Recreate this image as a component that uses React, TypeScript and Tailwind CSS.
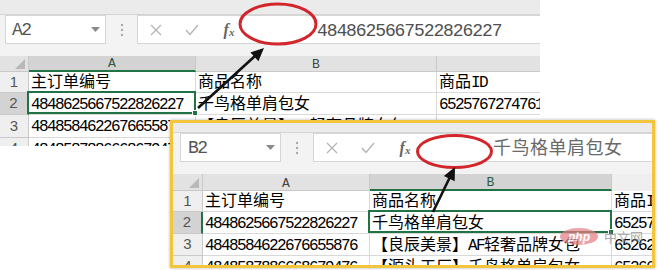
import React from 'react';

type Col = { label: string; w: string; headCls: string; labelCls: string };
type Row = { num: string; h: string; cells: string[] };

function Mixed({ text, asciiCls }: { text: string; asciiCls: string }) {
  const parts = text.match(/[\x00-\x7F]+|[^\x00-\x7F]+/g) || [];
  return (
    <>
      {parts.map((p, i) =>
        /^[\x00-\x7F]/.test(p) ? (
          <span key={i} className={asciiCls}>
            {p}
          </span>
        ) : (
          <span key={i}>{p}</span>
        )
      )}
    </>
  );
}

function Caret() {
  return (
    <svg width="9" height="5" viewBox="0 0 9 5">
      <path d="M0 0 L9 0 L4.5 5 Z" fill="#8a8a8a" />
    </svg>
  );
}

function Dots() {
  return (
    <svg width="4" height="14" viewBox="0 0 4 14">
      <circle cx="2" cy="2" r="1.2" fill="#a8a8a8" />
      <circle cx="2" cy="7" r="1.2" fill="#a8a8a8" />
      <circle cx="2" cy="12" r="1.2" fill="#a8a8a8" />
    </svg>
  );
}

function CrossIcon() {
  return (
    <svg width="12" height="12" viewBox="0 0 12 12">
      <path d="M1 1 L11 11 M11 1 L1 11" stroke="#b5b5b5" strokeWidth="1.3" fill="none" />
    </svg>
  );
}

function CheckIcon() {
  return (
    <svg width="14" height="12" viewBox="0 0 14 12">
      <path d="M1 6 L5 10.5 L13 1" stroke="#b5b5b5" strokeWidth="1.4" fill="none" />
    </svg>
  );
}

function Fx() {
  return (
    <span className="font-['Liberation_Serif',serif] italic text-[#666] leading-none flex items-end">
      <span className="text-[16px] font-bold">f</span>
      <span className="text-[11px] font-bold">x</span>
    </span>
  );
}

function Sheet({
  outerCls,
  topBandCls,
  nameBoxCls,
  name,
  dotsCls,
  formula,
  rhw,
  headH,
  cols,
  selCol,
  selRow,
  rows,
  triCls,
}: {
  outerCls: string;
  topBandCls: string;
  nameBoxCls: string;
  name: string;
  dotsCls: string;
  formula: React.ReactNode;
  rhw: string;
  headH: string;
  cols: Col[];
  selCol: number;
  selRow: number;
  rows: Row[];
  triCls: string;
}) {
  return (
    <div className={`flex flex-col bg-[#f3f3f3] overflow-hidden ${outerCls}`}>
      <div className={`shrink-0 bg-[#ebebeb] border-b border-[#d4d4d4] ${topBandCls}`} />
      <div className="flex items-stretch h-[29px] shrink-0">
        <div
          className={`${nameBoxCls} shrink-0 h-full bg-white border border-[#d6d6d6] flex items-center justify-between pr-[5px]`}
        >
          <span className="font-['Liberation_Mono',monospace] text-[18px] text-[#555] tracking-[-1.5px] leading-none">
            {name}
          </span>
          <Caret />
        </div>
        <div className={`${dotsCls} shrink-0 h-full flex items-center justify-center`}>
          <Dots />
        </div>
        <div className="flex-1 h-full bg-white border border-[#d6d6d6] border-r-0 flex items-center">
          <div className="w-[36px] h-full flex items-center justify-center">
            <CrossIcon />
          </div>
          <div className="w-[36px] h-full flex items-center justify-center">
            <CheckIcon />
          </div>
          <div className="w-[38px] h-full flex items-center justify-center">
            <Fx />
          </div>
          <div className="pl-[69px] whitespace-nowrap">{formula}</div>
        </div>
      </div>
      <div className="h-[12px] shrink-0" />
      <div className={`flex shrink-0 ${headH} bg-[#e2e2e2]`}>
        <div className={`${rhw} shrink-0 relative border-r border-b border-[#c9c9c9]`}>
          <div className={`absolute ${triCls}`}>
            <svg width="10" height="10" viewBox="0 0 10 10">
              <path d="M10 0 L10 10 L0 10 Z" fill="#b9b9b9" />
            </svg>
          </div>
        </div>
        {cols.map((c, i) => (
          <div
            key={i}
            className={`${c.w} shrink-0 flex items-end border-r border-[#c9c9c9] font-['Liberation_Mono',monospace] text-[13px] leading-none ${
              i === selCol
                ? 'bg-[#d3d3d3] border-b-2 border-b-[#217346] text-[#2d5a3f]'
                : 'border-b border-b-[#c9c9c9] text-[#444]'
            } ${c.headCls} ${c.labelCls}`}
          >
            {c.label}
          </div>
        ))}
      </div>
      {rows.map((r, ri) => (
        <div key={ri} className={`flex shrink-0 ${r.h}`}>
          <div
            className={`${rhw} shrink-0 flex items-center justify-center border-b border-[#c9c9c9] font-['Liberation_Sans',sans-serif] text-[15px] text-[#555] ${
              ri === selRow
                ? 'bg-[#d3d3d3] border-r-2 border-r-[#217346]'
                : 'bg-[#efefef] border-r border-r-[#c9c9c9]'
            }`}
          >
            {r.num}
          </div>
          {r.cells.map((c, ci) => {
            const sel = ri === selRow && ci === selCol;
            return (
              <div
                key={ci}
                className={`${cols[ci].w} shrink-0 relative bg-white border-r border-b border-[#d9d9d9]`}
              >
                <div className="w-full h-full overflow-hidden whitespace-nowrap flex items-center pt-[2px] pl-[2px] font-['Liberation_Mono','Noto_Sans_CJK_SC',monospace] text-[16px] leading-none text-black">
                  <Mixed text={c} asciiCls="tracking-[-1.6px]" />
                </div>
                {sel && (
                  <div className="absolute -left-[2px] -top-[2px] -right-[1px] bottom-[0px] border-2 border-[#217346] z-10">
                    <div className="absolute -right-[4px] -bottom-[4px] w-[6px] h-[6px] bg-[#217346] border border-white" />
                  </div>
                )}
              </div>
            );
          })}
        </div>
      ))}
    </div>
  );
}

export default function App() {
  const rows1: Row[] = [
    { num: '1', h: 'h-[21px]', cells: ['主订单编号', '商品名称', '商品ID'] },
    { num: '2', h: 'h-[22px]', cells: ['4848625667522826227', '千鸟格单肩包女', '6525767274761'] },
    { num: '3', h: 'h-[23px]', cells: ['4848584622676655876', '【良辰美景】AF轻奢品牌女包', ''] },
    { num: '4', h: 'h-[22px]', cells: ['4848587886668679476', '【源头工厂】千鸟格单肩包女', ''] },
  ];
  const rows2: Row[] = [
    { num: '1', h: 'h-[21px]', cells: ['主订单编号', '商品名称', '商品ID'] },
    { num: '2', h: 'h-[22px]', cells: ['4848625667522826227', '千鸟格单肩包女', '6525767274761'] },
    { num: '3', h: 'h-[22px]', cells: ['4848584622676655876', '【良辰美景】AF轻奢品牌女包', '6526272747610'] },
    { num: '4', h: 'h-[22px]', cells: ['4848587886668679476', '【源头工厂】千鸟格单肩包女', '6526676274761'] },
  ];
  const cols1: Col[] = [
    { label: 'A', w: 'w-[167px]', headCls: '', labelCls: 'justify-center' },
    { label: 'B', w: 'w-[241px]', headCls: '', labelCls: 'justify-center' },
    { label: 'C', w: 'w-[130px]', headCls: '', labelCls: 'justify-end pr-[16px]' },
  ];
  const cols2: Col[] = [
    { label: 'A', w: 'w-[167px]', headCls: '', labelCls: 'justify-center' },
    { label: 'B', w: 'w-[242px]', headCls: '', labelCls: 'justify-center' },
    { label: '', w: 'w-[90px]', headCls: 'bg-[#efefef] border-b-0', labelCls: '' },
  ];

  return (
    <div className="relative w-[658px] h-[270px] bg-white overflow-hidden">
      <Sheet
        outerCls="w-[540px] h-[146px]"
        topBandCls="h-[15px]"
        nameBoxCls="ml-[5px] w-[101px] pl-[6px]"
        name="A2"
        dotsCls="w-[31px]"
        formula={
          <span className="font-['Liberation_Mono',monospace] text-[18px] tracking-[-1.1px] text-[#505050] leading-none">
            4848625667522826227
          </span>
        }
        rhw="w-[29px]"
        headH="h-[16px]"
        cols={cols1}
        selCol={0}
        selRow={1}
        rows={rows1}
        triCls="right-[3px] bottom-[2px]"
      />

      <div className="absolute left-[170px] top-[120px] w-[485px] h-[148px] border-[3px] border-[#f2c53d] shadow-[0_0_3px_rgba(0,0,0,0.3)] bg-[#f3f3f3]">
        <Sheet
          outerCls="w-full h-full"
          topBandCls="h-[10px]"
          nameBoxCls="ml-[7px] w-[101px] pl-[7px]"
          name="B2"
          dotsCls="w-[32px]"
          formula={
            <span className="font-['Noto_Sans_CJK_SC',sans-serif] text-[18px] tracking-[0.5px] text-[#6a6a6a] leading-none">
              千鸟格单肩包女
            </span>
          }
          rhw="w-[30px]"
          headH="h-[17px]"
          cols={cols2}
          selCol={1}
          selRow={1}
          rows={rows2}
          triCls="right-[3px] bottom-[2px]"
        />
      </div>

      {/* watermark */}
      <div className="absolute left-[560px] top-[228px] flex items-center gap-[6px] opacity-70 pointer-events-none z-20">
        <div className="w-[38px] h-[17px] rounded-[50%] bg-[#e57c83] flex items-center justify-center">
          <span className="font-['Liberation_Sans',sans-serif] italic font-bold text-[12px] text-white leading-none">php</span>
        </div>
        <span className="font-['Noto_Sans_CJK_SC',sans-serif] text-[13px] text-[#8a8a8a] leading-none">中文网</span>
      </div>

      {/* annotations */}
      <svg className="absolute left-0 top-0 pointer-events-none z-30" width="658" height="270" viewBox="0 0 658 270">
        <ellipse cx="278" cy="24" rx="38" ry="20" fill="none" stroke="#d3262c" strokeWidth="3" />
        <ellipse cx="454.5" cy="151.5" rx="37" ry="16" fill="none" stroke="#d3262c" strokeWidth="3" />
        <line x1="198" y1="108" x2="255" y2="56" stroke="#111" strokeWidth="2.6" />
        <polygon points="264,48 258.4,61.2 250.4,52.4" fill="#111" />
        <line x1="433" y1="212" x2="449.5" y2="178" stroke="#111" strokeWidth="2.6" />
        <polygon points="455,167 454.7,181.3 443.9,176.1" fill="#111" />
      </svg>
    </div>
  );
}
